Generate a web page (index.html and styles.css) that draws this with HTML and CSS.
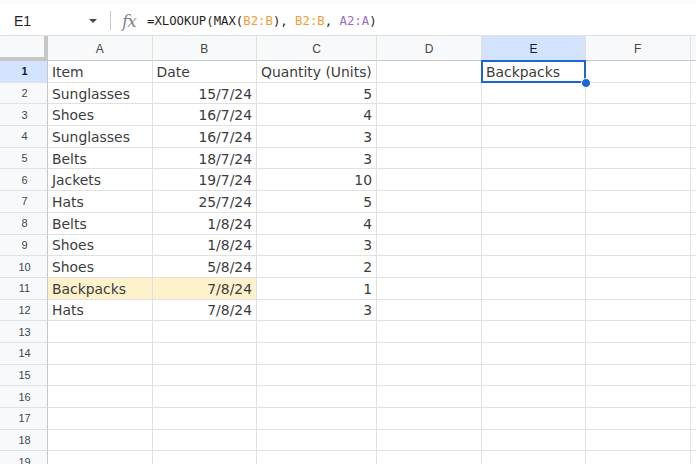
FILE: index.html
```html
<!DOCTYPE html>
<html>
<head>
<meta charset="utf-8">
<link rel="stylesheet" href="styles.css">
</head>
<body>
<div class="app">
  <div class="topstrip"></div>
  <div class="fbar">
    <div class="namebox"><span class="ref">E1</span><span class="caret"></span></div>
    <div class="sep"></div>
    <span class="fx">fx</span>
    <span class="formula">=XLOOKUP(MAX(<span class="r1">B2:B</span>), <span class="r1">B2:B</span>, <span class="r2">A2:A</span>)</span>
  </div>
  <div class="grid">
    <div class="corner"></div><div class="ch">A</div><div class="ch">B</div><div class="ch">C</div><div class="ch">D</div><div class="ch sel">E</div><div class="ch">F</div><div class="ch"></div>

    <div class="rh sel">1</div><div class="c">Item</div><div class="c">Date</div><div class="c">Quantity (Units)</div><div class="c"></div><div class="c active">Backpacks<span class="handle"></span></div><div class="c"></div><div class="c"></div>
    <div class="rh">2</div><div class="c">Sunglasses</div><div class="c n">15/7/24</div><div class="c n">5</div><div class="c"></div><div class="c"></div><div class="c"></div><div class="c"></div>
    <div class="rh">3</div><div class="c">Shoes</div><div class="c n">16/7/24</div><div class="c n">4</div><div class="c"></div><div class="c"></div><div class="c"></div><div class="c"></div>
    <div class="rh">4</div><div class="c">Sunglasses</div><div class="c n">16/7/24</div><div class="c n">3</div><div class="c"></div><div class="c"></div><div class="c"></div><div class="c"></div>
    <div class="rh">5</div><div class="c">Belts</div><div class="c n">18/7/24</div><div class="c n">3</div><div class="c"></div><div class="c"></div><div class="c"></div><div class="c"></div>
    <div class="rh">6</div><div class="c">Jackets</div><div class="c n">19/7/24</div><div class="c n">10</div><div class="c"></div><div class="c"></div><div class="c"></div><div class="c"></div>
    <div class="rh">7</div><div class="c">Hats</div><div class="c n">25/7/24</div><div class="c n">5</div><div class="c"></div><div class="c"></div><div class="c"></div><div class="c"></div>
    <div class="rh">8</div><div class="c">Belts</div><div class="c n">1/8/24</div><div class="c n">4</div><div class="c"></div><div class="c"></div><div class="c"></div><div class="c"></div>
    <div class="rh">9</div><div class="c">Shoes</div><div class="c n">1/8/24</div><div class="c n">3</div><div class="c"></div><div class="c"></div><div class="c"></div><div class="c"></div>
    <div class="rh">10</div><div class="c">Shoes</div><div class="c n">5/8/24</div><div class="c n">2</div><div class="c"></div><div class="c"></div><div class="c"></div><div class="c"></div>
    <div class="rh">11</div><div class="c hl">Backpacks</div><div class="c n hl">7/8/24</div><div class="c n">1</div><div class="c"></div><div class="c"></div><div class="c"></div><div class="c"></div>
    <div class="rh">12</div><div class="c">Hats</div><div class="c n">7/8/24</div><div class="c n">3</div><div class="c"></div><div class="c"></div><div class="c"></div><div class="c"></div>
    <div class="rh">13</div><div class="c"></div><div class="c"></div><div class="c"></div><div class="c"></div><div class="c"></div><div class="c"></div><div class="c"></div>
    <div class="rh">14</div><div class="c"></div><div class="c"></div><div class="c"></div><div class="c"></div><div class="c"></div><div class="c"></div><div class="c"></div>
    <div class="rh">15</div><div class="c"></div><div class="c"></div><div class="c"></div><div class="c"></div><div class="c"></div><div class="c"></div><div class="c"></div>
    <div class="rh">16</div><div class="c"></div><div class="c"></div><div class="c"></div><div class="c"></div><div class="c"></div><div class="c"></div><div class="c"></div>
    <div class="rh">17</div><div class="c"></div><div class="c"></div><div class="c"></div><div class="c"></div><div class="c"></div><div class="c"></div><div class="c"></div>
    <div class="rh">18</div><div class="c"></div><div class="c"></div><div class="c"></div><div class="c"></div><div class="c"></div><div class="c"></div><div class="c"></div>
    <div class="rh">19</div><div class="c"></div><div class="c"></div><div class="c"></div><div class="c"></div><div class="c"></div><div class="c"></div><div class="c"></div>
  </div>
</div>
</body>
</html>
```
FILE: styles.css
```css
* { box-sizing: border-box; }
html, body { margin: 0; padding: 0; background: #fff; }
body { width: 696px; height: 464px; overflow: hidden; }

.app { width: 696px; }

.topstrip { height: 4px; background: #f9fbfd; }

.fbar {
  height: 32px;
  border-bottom: 1px solid #e1e3e1;
  display: flex;
  align-items: center;
  padding-top: 2px;
}
.namebox {
  width: 110px;
  display: flex;
  align-items: center;
  padding-left: 14px;
  padding-right: 13px;
  justify-content: space-between;
}
.ref {
  font-family: "Liberation Sans", Arial, sans-serif;
  font-size: 14px;
  color: #1f1f1f;
}
.caret {
  width: 0; height: 0;
  border-left: 4px solid transparent;
  border-right: 4px solid transparent;
  border-top: 4px solid #444746;
}
.sep {
  width: 1px;
  height: 19px;
  background: #c7c7c7;
}
.fx {
  margin-left: 11px;
  font-family: "DejaVu Serif", "Liberation Serif", serif;
  font-style: italic;
  font-size: 17px;
  color: #80868b;
  letter-spacing: -1px;
  width: 25px;
}
.formula {
  font-family: "DejaVu Sans Mono", monospace;
  font-size: 12.3px;
  color: #1f1f1f;
}
.r1 { color: #f29c38; }
.r2 { color: #9c6bc9; }

.grid {
  display: grid;
  grid-template-columns: 48px 104.5px 104.5px 120px 105px 104px 104.5px 1fr;
  grid-template-rows: 25px;
  grid-auto-rows: 21.7px;
}

.corner {
  background: #f8f9fa;
  border-right: 4px solid #c7c7c7;
  border-bottom: 4px solid #c7c7c7;
}
.ch {
  background: #f8f9fa;
  border-right: 1px solid #e1e1e1;
  border-bottom: 1px solid #c7c7c7;
  font-family: "Liberation Sans", Arial, sans-serif;
  font-size: 12px;
  color: #444746;
  display: flex;
  align-items: center;
  justify-content: center;
  padding-top: 1px;
}
.ch.sel { background: #d3e3fd; color: #0b1b3f; }

.rh {
  background: #f8f9fa;
  border-right: 1px solid #c7c7c7;
  border-bottom: 1px solid #e1e1e1;
  font-family: "Liberation Sans", Arial, sans-serif;
  font-size: 11px;
  color: #444746;
  display: flex;
  align-items: center;
  justify-content: center;
  padding-left: 2px;
}
.rh.sel { background: #d3e3fd; color: #0b1b3f; font-weight: bold; }

.c {
  border-right: 1px solid #e1e1e1;
  border-bottom: 1px solid #e1e1e1;
  font-family: "DejaVu Sans", Verdana, sans-serif;
  font-size: 13.9px;
  color: #3c3c3c;
  display: flex;
  align-items: center;
  padding: 1px 4px 0 4px;
  white-space: nowrap;
  overflow: visible;
}
.c.n { justify-content: flex-end; }
.c.hl { background: #fef2cc; }

.c.active { position: relative; }
.c.active::after {
  content: "";
  position: absolute;
  left: -1px; top: -1px; right: -1px; bottom: -1px;
  border: 2px solid #1a66d9;
}
.handle {
  position: absolute;
  right: -6px;
  bottom: -6px;
  width: 10px;
  height: 10px;
  border-radius: 50%;
  background: #1a66d9;
  border: 1px solid #fff;
  z-index: 2;
}
```
